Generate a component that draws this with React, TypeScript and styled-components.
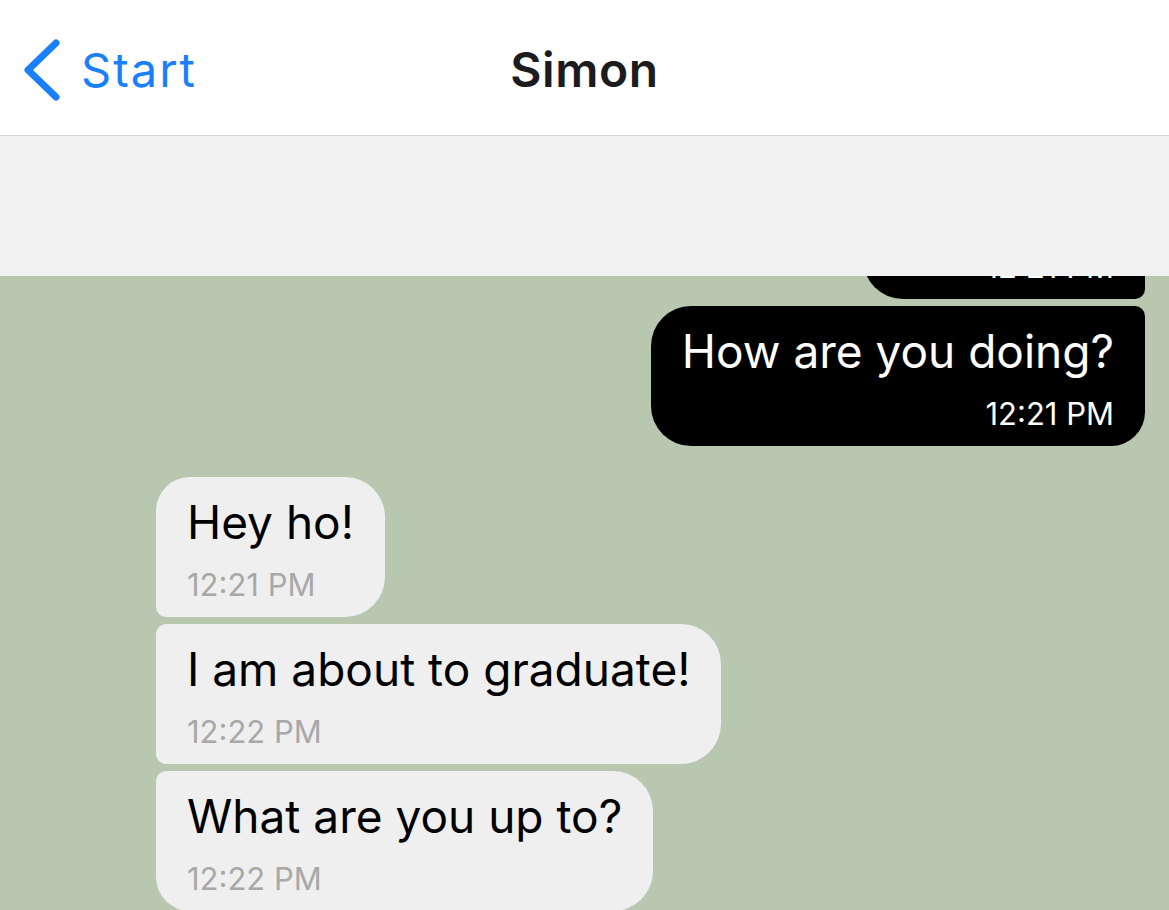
import React from "react";
import styled, { createGlobalStyle, css } from "styled-components";

const GlobalStyle = createGlobalStyle`
  html, body {
    margin: 0;
    padding: 0;
    height: 100%;
    overflow: hidden;
  }
  body {
    font-family: Inter, "Noto Sans", "Liberation Sans", sans-serif;
    -webkit-font-smoothing: antialiased;
  }
  #root { height: 100%; }
`;

const Screen = styled.div`
  height: 100vh;
  display: flex;
  flex-direction: column;
  background: #ffffff;
`;

const NavBar = styled.header`
  flex: none;
  display: grid;
  grid-template-columns: 1fr auto 1fr;
  align-items: center;
  background: #ffffff;
  border-bottom: 1px solid #d6d6d6;
  box-sizing: border-box;
  height: 136px;
`;

const BackButton = styled.button`
  justify-self: start;
  display: flex;
  align-items: center;
  gap: 21px;
  margin: 4px 0 0 22px;
  padding: 0;
  border: none;
  background: none;
  color: #1a7ffb;
  font-family: inherit;
  font-size: 47px;
  font-weight: 400;
  letter-spacing: 2px;
  cursor: pointer;
`;

const Title = styled.h1`
  margin: 4px 0 0;
  font-size: 48px;
  font-weight: 600;
  color: #1c1c1e;
  letter-spacing: 0.6px;
`;

const Banner = styled.div`
  height: 140px;
  flex: none;
  background: #f1f1f1;
`;

const Thread = styled.main`
  flex: 1;
  min-height: 0;
  overflow: hidden;
  display: flex;
  flex-direction: column;
  justify-content: flex-end;
  background: #b8c7b0;
  padding: 0 24px 0 156px;
  margin-bottom: -1px;
`;

const Group = styled.div<{ $mine?: boolean }>`
  display: flex;
  flex-direction: column;
  align-items: ${(p) => (p.$mine ? "flex-end" : "flex-start")};
  gap: 7px;
  & + & {
    margin-top: 31px;
  }
`;

type Pos = "first" | "middle" | "last" | "single";

const Bubble = styled.div<{ $mine?: boolean; $pos: Pos }>`
  box-sizing: border-box;
  height: 140px;
  flex: none;
  padding: 17px 31px 14px 31px;
  display: flex;
  flex-direction: column;
  ${(p) =>
    p.$mine
      ? css`
          background: #000000;
          color: #ffffff;
          align-items: flex-end;
          border-radius: 40px
            ${p.$pos === "first" || p.$pos === "single" ? "40px" : "10px"}
            ${p.$pos === "last" || p.$pos === "single" ? "34px" : "10px"} 40px;
        `
      : css`
          background: #efefef;
          color: #000000;
          align-items: flex-start;
          border-radius: ${p.$pos === "first" || p.$pos === "single"
              ? "34px"
              : "10px"}
            40px 40px
            ${p.$pos === "last" || p.$pos === "single" ? "34px" : "10px"};
        `}
`;

const Text = styled.div`
  font-size: 46px;
  line-height: 56px;
  white-space: nowrap;
  letter-spacing: 0;
`;

const Time = styled.div<{ $mine?: boolean }>`
  margin-top: 17px;
  font-size: 31px;
  line-height: 36px;
  white-space: nowrap;
  color: ${(p) => (p.$mine ? "#ffffff" : "#a8a8a8")};
`;

const Chevron = () => (
  <svg width="38" height="62" viewBox="0 0 38 62" aria-hidden="true">
    <polyline
      points="34,4 6,31 34,58"
      fill="none"
      stroke="currentColor"
      strokeWidth="7"
      strokeLinecap="round"
      strokeLinejoin="round"
    />
  </svg>
);

type Msg = { text: string; time: string };

const sent: Msg[] = [
  { text: "Hi, Simon!", time: "12:21 PM" },
  { text: "How are you doing?", time: "12:21 PM" },
];

const received: Msg[] = [
  { text: "Hey ho!", time: "12:21 PM" },
  { text: "I am about to graduate!", time: "12:22 PM" },
  { text: "What are you up to?", time: "12:22 PM" },
];

const posOf = (i: number, n: number): Pos =>
  n === 1 ? "single" : i === 0 ? "first" : i === n - 1 ? "last" : "middle";

export default function App() {
  return (
    <Screen>
      <GlobalStyle />
      <NavBar>
        <BackButton>
          <Chevron />
          Start
        </BackButton>
        <Title>Simon</Title>
        <span />
      </NavBar>
      <Banner />
      <Thread>
        <Group $mine>
          {sent.map((m, i) => (
            <Bubble key={i} $mine $pos={posOf(i, sent.length)}>
              <Text>{m.text}</Text>
              <Time $mine>{m.time}</Time>
            </Bubble>
          ))}
        </Group>
        <Group>
          {received.map((m, i) => (
            <Bubble key={i} $pos={posOf(i, received.length)}>
              <Text>{m.text}</Text>
              <Time>{m.time}</Time>
            </Bubble>
          ))}
        </Group>
      </Thread>
    </Screen>
  );
}
